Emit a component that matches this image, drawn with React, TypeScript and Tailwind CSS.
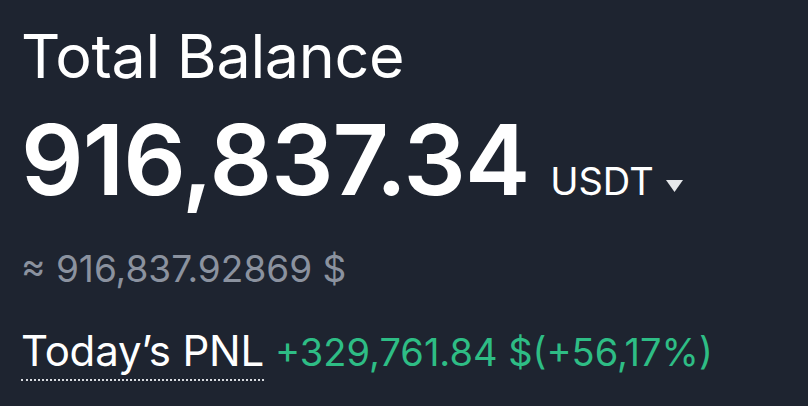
import React from "react";

export default function App() {
  return (
    <div
      className="w-[808px] h-[406px] bg-[#1e2430] text-white overflow-hidden pl-[21px] pt-[20px]"
      style={{ fontFamily: "Inter, 'Noto Sans', sans-serif" }}
    >
      <div className="text-[61px] leading-[72px] font-normal tracking-[-0.3px]">Total Balance</div>
      <div className="flex items-baseline mt-[18px]">
        <span className="text-[98px] leading-[100px] font-semibold tracking-[-1px]">916,837.34</span>
        <span className="text-[38px] leading-[40px] ml-[21px]">USDT</span>
        <svg width="19" height="14" viewBox="0 0 19 14" className="ml-[11px] self-center mt-[52px]">
          <path d="M1 1 H18 L9.5 13 Z" fill="#e6e8eb" />
        </svg>
      </div>
      <div className="text-[37px] leading-[40px] text-[#8b929f] mt-[39px]">≈ 916,837.92869 $</div>
      <div className="flex items-baseline mt-[40px] leading-[44px]">
        <span className="text-[42px] border-b-2 border-dotted border-[#d8dbe0] pb-[6px] tracking-[-0.2px]">Today’s PNL</span>
        <span className="text-[38px] ml-[11px] text-[#2ebd85]">+329,761.84 $(+56,17%)</span>
      </div>
    </div>
  );
}
